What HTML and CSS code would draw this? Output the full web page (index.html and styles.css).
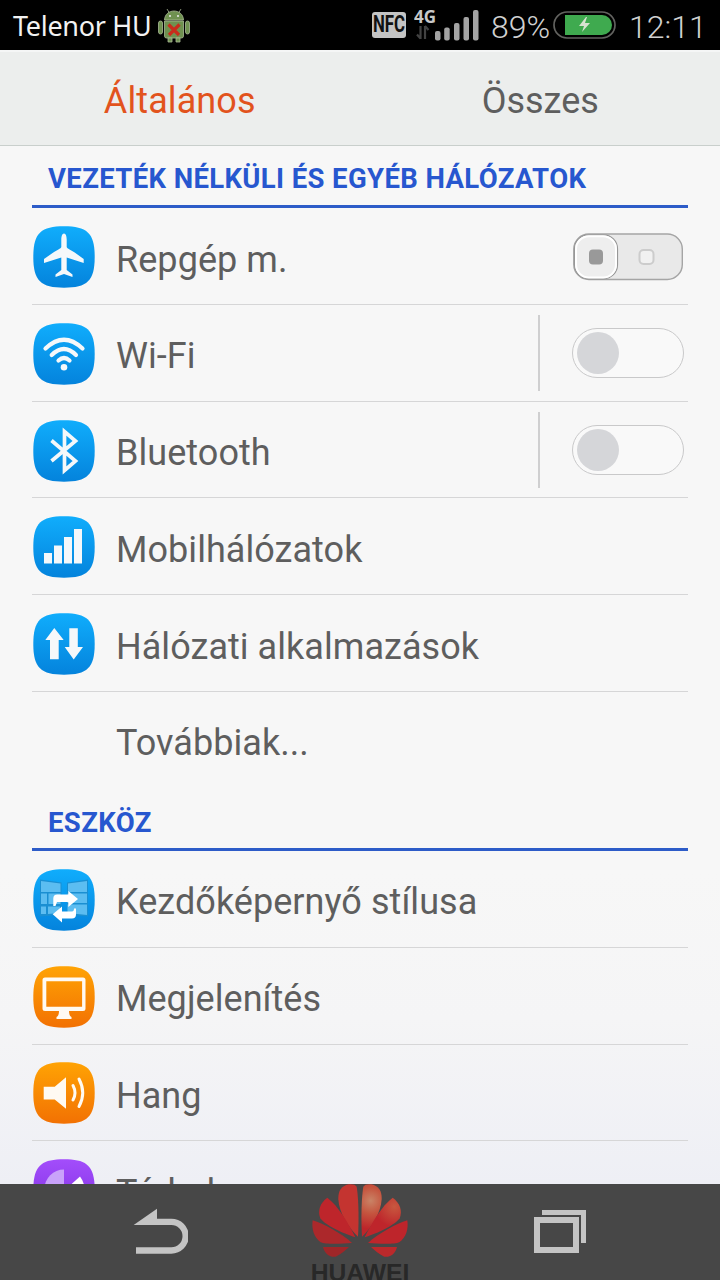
FILE: index.html
```html
<!DOCTYPE html>
<html lang="hu">
<head>
<meta charset="utf-8">
<title>Beállítások</title>
<link rel="stylesheet" href="styles.css">
</head>
<body>
<svg class="defs" width="0" height="0" aria-hidden="true">
  <defs>
    <linearGradient id="blue" x1="0" y1="0" x2="0" y2="1"><stop offset="0" stop-color="#10adfc"/><stop offset="1" stop-color="#0483dc"/></linearGradient>
    <linearGradient id="orange" x1="0" y1="0" x2="0" y2="1"><stop offset="0" stop-color="#ffa304"/><stop offset="1" stop-color="#f27103"/></linearGradient>
    <linearGradient id="purple" x1="0" y1="0" x2="0" y2="1"><stop offset="0" stop-color="#a34dfb"/><stop offset="1" stop-color="#7c2fe0"/></linearGradient>
    <radialGradient id="petal" gradientUnits="userSpaceOnUse" cx="212" cy="92" r="85"><stop offset="0" stop-color="#c98366"/><stop offset=".45" stop-color="#c5553f"/><stop offset="1" stop-color="#bd252a"/></radialGradient>
    <radialGradient id="petalSide" gradientUnits="userSpaceOnUse" cx="283" cy="110" r="60"><stop offset="0" stop-color="#c8583f"/><stop offset="1" stop-color="#be252b"/></radialGradient>
    <path id="tile" d="M31 .3C54 .3 61.700 7 61.700 31S54 61.700 31 61.700 .3 55 .3 31 8 .3 31 .3Z"/>
  </defs>
</svg>
<div class="phone">
  <header class="status">
    <span class="carrier">Telenor HU</span>
    <svg class="droid" width="34" height="36" viewBox="0 0 34 36">
      <g fill="#6f9150" stroke="#a9b995" stroke-width=".8">
        <path d="M10 1l3 5M24 1l-3 5"/><path d="M7.500 12C8 0 26 0 26.500 12Z"/>
        <path d="M7.500 13h19v15q0 2-2 2h-15q-2 0-2-2Z"/>
        <rect x="1.500" y="13" width="4" height="13" rx="2"/><rect x="28.500" y="13" width="4" height="13" rx="2"/>
        <path d="M11 30h4v4h-4zM19 30h4v4h-4z"/>
      </g>
      <circle cx="13" cy="8" r="1" fill="#eee"/><circle cx="21" cy="8" r="1" fill="#eee"/>
      <path d="M11.500 16.500l10.500 10.500M22.500 16.500l-10.500 10.500" stroke="#c92c1c" stroke-width="3.200"/>
    </svg>
    <span class="nfc"><b>NFC</b></span>
    <svg class="signal" width="66" height="36" viewBox="0 0 66 36">
      <text x="0" y="17" class="gen">4G</text>
      <path d="M6.500 20v13M3 28.500l3.500 4M11 33V20M14.500 24L11 20" fill="none" stroke="#424242" stroke-width="2.200"/>
      <g fill="#a3a3a3"><rect x="21" y="25" width="5.500" height="9.500" rx="2"/><rect x="30.200" y="21.500" width="5.500" height="13" rx="2"/><rect x="40" y="17" width="5.500" height="17.500" rx="2"/><rect x="49.500" y="11" width="5.500" height="23.500" rx="2"/><rect x="59" y="4" width="5.500" height="30.500" rx="2"/></g>
    </svg>
    <span class="percent">89%</span>
    <svg class="battery" width="63" height="28" viewBox="0 0 63 28">
      <rect x="1" y="1" width="61" height="26" rx="13" fill="#000" stroke="#62625f" stroke-width="1.700"/>
      <path d="M12 4H49a10 10 0 0 1 0 20H12Z" fill="#3faa4f"/>
      <path d="M33 6L26 15h5l-2 6 8-9h-5l2-6Z" fill="#d6e2d0"/>
    </svg>
    <time class="clock">12:11</time>
  </header>
  <nav class="tabs"><span class="tab active">Általános</span><span class="tab">Összes</span></nav>
  <main class="content">
    <section>
      <h2>VEZETÉK NÉLKÜLI ÉS EGYÉB HÁLÓZATOK</h2>
      <div class="row">
        <svg class="icon" viewBox="0 0 62 62"><use href="#tile" fill="url(#blue)"/><path d="M31 7.500c2 0 2.700 3.500 2.700 6v7.500c0 1.500 5 3.500 8 5.500l9 6.500v4L33.700 31.500V44l5.800 4.500v2.500L31 48l-8.500 3v-2.500l5.800-4.500V31.500L11 37v-4l9.300-6.500c3-2 8-4 8-5.500v-7.500c0-2.500.7-6 2.700-6Z" fill="#f5f8fa"/></svg>
        <span class="label">Repgép m.</span>
        <svg class="flight" width="112" height="48" viewBox="0 0 112 48"><rect x="1.800" y="1" width="108.500" height="45.500" rx="15" fill="#e9e9e9" stroke="#a5a5a5" stroke-width="1.400"/><rect x="2.500" y="1.800" width="43" height="44" rx="14" fill="#eee" stroke="#979797" stroke-width="1.200"/><rect x="4" y="3.200" width="40" height="41.300" rx="13" fill="#eee" stroke="#fff" stroke-width="2"/><rect x="17" y="16.500" width="14" height="15" rx="4" fill="#999"/><rect x="67.500" y="17" width="14" height="14" rx="4" fill="#f1f1f1" stroke="#ccc" stroke-width="2"/></svg>
      </div>
      <div class="row">
        <svg class="icon" viewBox="0 0 62 62"><use href="#tile" fill="url(#blue)"/><g fill="none" stroke="#f5f8fa" stroke-width="4.200" stroke-linecap="round"><path d="M12.500 25.500Q31 8 49.500 25.500M18.700 32Q31 20 43 32M25.500 37.500Q31 32.500 36.500 37.500"/></g><circle cx="31" cy="44.300" r="3.300" fill="#f5f8fa"/></svg>
        <span class="label">Wi-Fi</span>
        <span class="switch"><i></i></span>
      </div>
      <div class="row">
        <svg class="icon" viewBox="0 0 62 62"><use href="#tile" fill="url(#blue)"/><path d="M18.500 20.500L42.500 41 31.500 50.500V11.500L42.500 21 18.500 41" fill="none" stroke="#f5f8fa" stroke-width="3.700"/></svg>
        <span class="label">Bluetooth</span>
        <span class="switch"><i></i></span>
      </div>
      <div class="row">
        <svg class="icon" viewBox="0 0 62 62"><use href="#tile" fill="url(#blue)"/><path d="M11 37h8v10.500h-8zM21 29.500h8v18h-8zM31 21h8v26.500h-8zM41 13h8v34.500h-8z" fill="#f5f8fa"/></svg>
        <span class="label">Mobilhálózatok</span>
      </div>
      <div class="row">
        <svg class="icon" viewBox="0 0 62 62"><use href="#tile" fill="url(#blue)"/><path d="M21.300 15L30.700 27h-5v19.300H17V27h-4.700ZM36.300 15.300h8.500V34H50l-9.300 12.500L31.700 34h4.600Z" fill="#f5f8fa"/></svg>
        <span class="label">Hálózati alkalmazások</span>
      </div>
      <div class="row last"><span class="icon"></span><span class="label">Továbbiak...</span></div>
    </section>
    <section>
      <h2 class="device">ESZKÖZ</h2>
      <div class="row">
        <svg class="icon" viewBox="0 0 62 62"><use href="#tile" fill="url(#blue)"/>
          <path d="M7 10.500l21.500 3V46L7 47.500ZM55 10.500l-21 3V46l21 1.500Z" fill="#1a8fd2"/>
          <path d="M8 12l19.500 2.500V23H8ZM8 24.500h6v10.500H8ZM15.500 24.500h12v10.500h-12ZM8 37.500h5V45H8ZM15 37.500h12V44l-12 1ZM54 12l-19 2.500V23h19ZM34.500 24.500H54v9.500H34.500ZM34.500 35.500H54V46l-19.500-2Z" fill="#5cbdf1"/>
          <path d="M20.300 37V29.500q0-4 4-4H35.300v-3.500l9.700 8-9.700 8V33H24l-1.500 4ZM43 39.500v6q0 4-4 4H29V53.500L19.700 45.300 29 37.500v5h10q2 0 2-3Z" fill="#fff"/></svg>
        <span class="label">Kezdőképernyő stílusa</span>
      </div>
      <div class="row">
        <svg class="icon" viewBox="0 0 62 62"><use href="#tile" fill="url(#orange)"/><path fill-rule="evenodd" d="M12 11.500h38q2.500 0 2.500 2.500v28.500q0 2.500-2.500 2.500H36q0 5 2.500 6v2h-15v-2q2.500-1 2.500-6H12q-2.500 0-2.500-2.500V14q0-2.500 2.500-2.500ZM13.300 15.200v25.600h35.800V15.200Z" fill="#fffaf2"/></svg>
        <span class="label">Megjelenítés</span>
      </div>
      <div class="row">
        <svg class="icon" viewBox="0 0 62 62"><use href="#tile" fill="url(#orange)"/><path d="M10.700 24.700h11L33 15.300v31.500L21.700 37.500h-11Z" fill="#fffaf2"/><path d="M40 23.500q4 7.500 0 14.500M46 17q7.500 14 0 27.500" fill="none" stroke="#fffaf2" stroke-width="3" stroke-linecap="round"/></svg>
        <span class="label">Hang</span>
      </div>
      <div class="row last">
        <svg class="icon" viewBox="0 0 62 62"><use href="#tile" fill="url(#purple)"/><path d="M31 30V10.500A19.500 19.500 0 0 0 11.500 30Z" fill="#c9a2fa"/><path d="M33 30L47 17.500q4.500 6 4.500 12.500Z" fill="#fff"/></svg>
        <span class="label">Tárhely</span>
      </div>
    </section>
  </main>
  <footer class="navbar">
    <svg width="56" height="48" viewBox="0 0 168 144"><path d="M5 51L75 2v30h43a52 52 0 0 1 0 105H12v-19h106a33 33 0 0 0 0-67Z" fill="#c4c4c4"/></svg>
    <svg class="brand" width="98" height="96" viewBox="33 42 294 288">
      <g>
        <path d="M186 200C183 150 184 85 190 50Q196 41 214 43C238 49 246 65 245 88C243 130 213 175 186 200Z" fill="url(#petal)"/>
        <path d="M194 202C214 160 246 107 278 83C300 99 308 122 299 145C285 165 233 190 194 202Z" fill="url(#petalSide)"/>
        <path d="M204 219C235 190 290 161 322 151C326 178 318 202 298 217C286 223 239 222 204 219Z" fill="#be252b"/>
        <path d="M213 231L291 231C286 254 267 263 253 260C239 254 225 242 213 231Z" fill="#bb292b"/>
      </g>
      <g transform="translate(360 0) scale(-1 1)">
        <path d="M186 200C183 150 184 85 190 50Q196 41 214 43C238 49 246 65 245 88C243 130 213 175 186 200Z" fill="#c43430"/>
        <path d="M194 202C214 160 246 107 278 83C300 99 308 122 299 145C285 165 233 190 194 202Z" fill="#be252b"/>
        <path d="M204 219C235 190 290 161 322 151C326 178 318 202 298 217C286 223 239 222 204 219Z" fill="#ac282b"/>
        <path d="M213 231L291 231C286 254 267 263 253 260C239 254 225 242 213 231Z" fill="#9f2628"/>
      </g>
      <text x="32" y="333" textLength="296" lengthAdjust="spacingAndGlyphs" class="brandname">HUAWEI</text>
    </svg>
    <svg class="recents" width="54" height="46" viewBox="0 0 54 46"><path d="M9 1h44v33h-5V6H9ZM1 8h45v36H1ZM7 14v24h33V14Z" fill-rule="evenodd" fill="#c4c4c4"/></svg>
  </footer>
</div>
</body>
</html>
```

FILE: styles.css
```css
* { box-sizing: border-box; }
body { margin: 0; background: #000; }
.defs { position: absolute; }
.phone {
  width: 720px; height: 1280px; overflow: hidden;
  display: flex; flex-direction: column;
  font-family: Roboto, "Noto Sans", sans-serif;
  color: #5e5e5e;
}
.status {
  height: 50px; flex: none; background: #000; color: #d0d0d0;
  display: flex; align-items: center; white-space: nowrap;
  padding: 1px 0 0 13px;
}
.carrier { width: 144px; font: 27px/40px "Noto Sans", sans-serif; color: #f2f2f2; letter-spacing: -.3px; }
.droid { flex: none; }
.nfc {
  width: 34px; height: 26px; margin: -1px 8px 0 181px; background: #c4c4c4; border-radius: 3px;
  color: #111; display: flex; align-items: center; justify-content: center; flex: none;
}
.nfc b { font-size: 23px; line-height: 26px; transform: scaleX(.73); }
.signal { flex: none; margin-top: -3px; }
.gen { font: bold 17px "Noto Sans", sans-serif; fill: #c8c8c8; }
.percent { width: 62px; margin-left: 11px; font-size: 32px; font-weight: 300; line-height: 46px; flex: none; padding-top: 2px; }
.battery { flex: none; margin-top: -1px; }
.clock { margin-left: 13px; font-size: 32px; font-weight: 300; line-height: 46px; padding-top: 2px; }
.tabs {
  height: 96px; flex: none; display: flex; background: #eceeed;
  border-top: 2px solid #f5f6f6; border-bottom: 1px solid #c9cfcc;
}
.tab { flex: 1; text-align: center; font-size: 36px; line-height: 99px; }
.active { color: #e2531d; letter-spacing: .1px; padding-right: 1px; }
.content {
  flex: 1; min-height: 0; overflow: hidden; padding: 0 32px;
  background: linear-gradient(#f7f7f7 0 70%, #f5f5f6 84%, #eeeff5);
}
h2 {
  margin: 0; height: 62.300px; border-bottom: 3px solid #2d5cc8; padding-left: 16px;
  color: #2757cf; font-size: 27.500px; font-weight: 700; line-height: 66px; letter-spacing: .37px; white-space: nowrap;
}
.device { height: 62.500px; line-height: 67px; }
.row {
  height: 96.720px; display: flex; align-items: center; padding-left: 1px;
  border-bottom: 1.400px solid #d6d6d7;
}
.last { border-bottom-color: transparent; }
.icon { width: 62px; height: 62px; flex: none; margin: 2px 21px 0 0; }
.label { flex: 1; font-size: 36px; line-height: 48px; padding-top: 7px; white-space: nowrap; letter-spacing: .05px; }
.flight { margin: 2px 4px 0 0; }
.switch {
  height: 76px; width: 150px; border-left: 2px solid #cfcfd0;
  display: flex; align-items: center; padding-left: 32px;
}
.switch i {
  width: 112px; height: 50px; border: 1.500px solid #c9c9ca; border-radius: 25px; background: #f9f9f9;
  display: block; padding: 3px 4px;
}
.switch i::before { content: ""; display: block; width: 42px; height: 42px; border-radius: 50%; background: #d5d6d9; }
.navbar {
  height: 96px; flex: none; background: #474747;
  display: grid; grid-template-columns: 56px 98px 54px; column-gap: 123px;
  align-items: center; padding-left: 132px;
}
.recents { margin-left: 1px; }
.brandname { font: bold 72px "Liberation Sans", sans-serif; fill: #282828; }
```
